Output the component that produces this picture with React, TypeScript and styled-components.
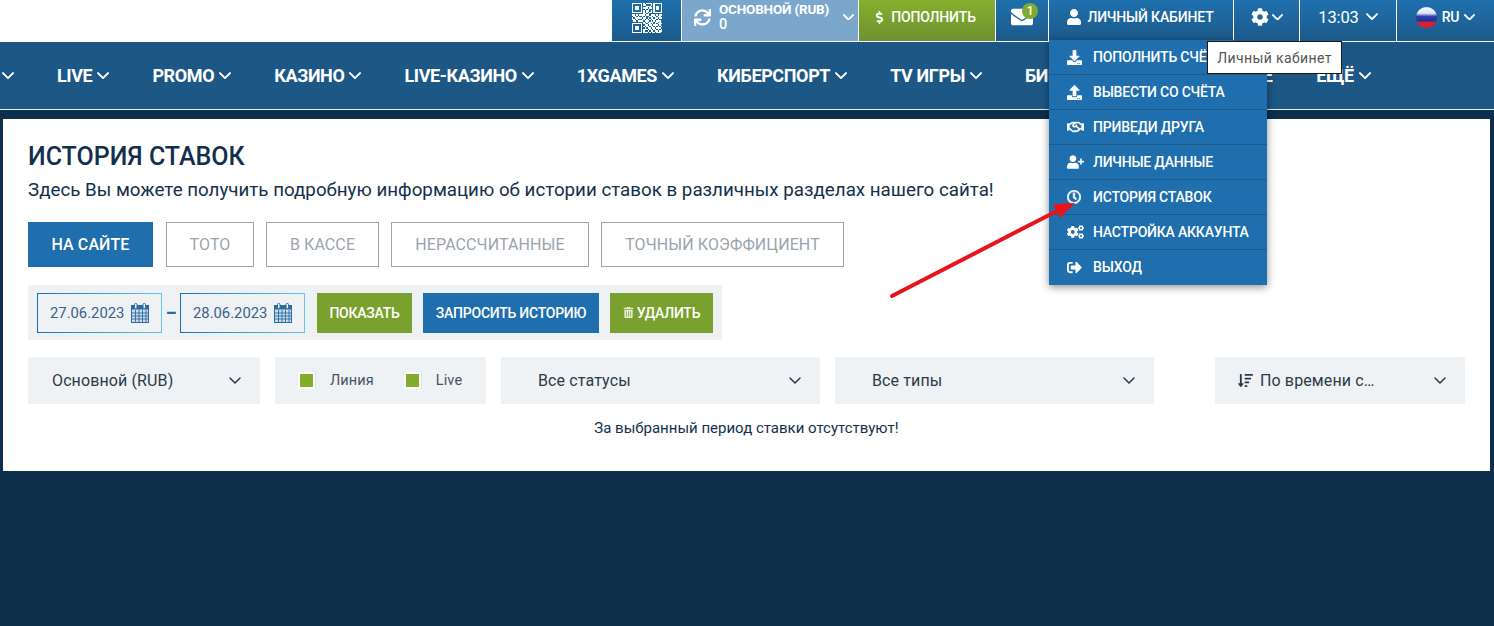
import React from "react";
import styled, { createGlobalStyle } from "styled-components";
import {
  FaSync, FaEnvelope, FaUser, FaCog, FaDownload, FaUpload, FaRegHandshake,
  FaUserPlus, FaRegClock, FaCogs, FaSignOutAlt, FaTrashAlt, FaSortAmountDown, FaDollarSign,
} from "react-icons/fa";

const Global = createGlobalStyle`
  html, body { margin: 0; padding: 0; background: #0d2f4b; height: 100%; overflow: hidden; }
  * { box-sizing: border-box; }
  body { font-family: Roboto, "Liberation Sans", sans-serif; }
`;

const Page = styled.div`
  position: relative;
  width: 1494px;
  height: 626px;
  overflow: hidden;
  background: #0d2f4b;
`;

const TopBar = styled.header`
  height: 42px;
  background: #fff;
  display: flex;
  justify-content: flex-end;
  gap: 1px;
  padding-bottom: 1px;
  position: relative;
  z-index: 3;
`;

const TopItem = styled.div<{ $w: number; $variant?: "blue" | "balance" | "green"; $gap?: number; $pr?: number; $pl?: number }>`
  width: ${(p) => p.$w}px;
  height: 41px;
  position: relative;
  display: flex;
  align-items: center;
  justify-content: center;
  gap: ${(p) => p.$gap ?? 5}px;
  padding: 0 ${(p) => p.$pr ?? 0}px 7px ${(p) => p.$pl ?? 0}px;
  color: #fff;
  font-size: 14px;
  font-weight: 500;
  letter-spacing: -0.15px;
  background: ${(p) =>
    p.$variant === "balance"
      ? "#7ba7cd"
      : p.$variant === "green"
      ? "linear-gradient(to bottom, #86b02e, #6d9030)"
      : "linear-gradient(to bottom, #1f70ae, #1c5a89)"};
`;

const QrSlot = styled(TopItem)`
  padding-bottom: 5px;
`;

const BalanceText = styled.div`
  display: flex;
  flex-direction: column;
  width: 119px;
  font-size: 13.5px;
  font-weight: 700;
  line-height: 16px;
  margin-left: 3px;
  letter-spacing: -0.2px;
  span:last-child { font-size: 14.5px; font-weight: 500; }
`;

const Badge = styled.span`
  position: absolute;
  top: 3px;
  left: 26px;
  width: 16px;
  height: 16px;
  border-radius: 50%;
  background: #7fa92f;
  color: #fff;
  font-size: 12px;
  font-weight: 500;
  display: flex;
  align-items: center;
  justify-content: center;
`;

const Time = styled.span`
  font-size: 16.5px;
  font-weight: 400;
  margin-right: 2px;
`;

const Flag = styled.span`
  display: block;
  width: 21px;
  height: 21px;
  border-radius: 50%;
  background: linear-gradient(to bottom, #f4f6fa 0%, #dfe6f2 30%, #2f40b0 45%, #22319c 65%, #e0202a 75%, #d81e28 100%);
`;

const Chev = ({ size = 12, width = 2 }: { size?: number; width?: number }) => (
  <svg width={size} height={size * 0.6} viewBox="0 0 12 7" fill="none" style={{ flex: "none" }}>
    <path d="M1 1l5 5 5-5" stroke="currentColor" strokeWidth={width} strokeLinecap="round" strokeLinejoin="round" />
  </svg>
);

const QrIcon = () => {
  const cells = [
    "111111101011110111111",
    "100000101100010100001",
    "101110100011100101101",
    "101110101110110101101",
    "101110100101000101101",
    "100000101011010100001",
    "111111101010110111111",
    "000000001101000000000",
    "110101111011011101011",
    "011010010100110110110",
    "101111101101011011011",
    "110100011010101110100",
    "011011110111010101110",
    "000000001010111011010",
    "111111101101101010111",
    "100000100110110111010",
    "101110101011011010101",
    "101110100101101101110",
    "101110101110110110101",
    "100000101001011011011",
    "111111101110101101110",
  ];
  return (
    <svg width="30" height="30" viewBox="0 0 21 21" shapeRendering="crispEdges">
      {cells.map((row, y) =>
        row.split("").map((c, x) => (c === "1" ? <rect key={`${x}-${y}`} x={x} y={y} width="1" height="1" fill="#fff" /> : null))
      )}
    </svg>
  );
};

const CalendarIcon = () => (
  <svg width="18" height="20" viewBox="0 0 18 20" style={{ flex: "none" }}>
    <rect x="0.5" y="2.5" width="17" height="17" fill="#cfdbe7" stroke="#2a6ba3" />
    <rect x="0.5" y="2.5" width="17" height="4" fill="#2a6ba3" />
    <rect x="3.5" y="0.5" width="2.5" height="5" rx="1" fill="#eff2f5" stroke="#2a6ba3" />
    <rect x="12" y="0.5" width="2.5" height="5" rx="1" fill="#eff2f5" stroke="#2a6ba3" />
    <path d="M1 10h16M1 13h16M1 16h16M4.500 7v12M8 7v12M11.500 7v12M15 7v12" stroke="#2a6ba3" strokeWidth="0.9" />
  </svg>
);

const Nav = styled.nav`
  height: 68px;
  background: #1d5785;
  border-bottom: 1px solid #e8eef3;
  display: flex;
  align-items: center;
  padding: 0 0 0 2px;
  gap: 43px;
  overflow: hidden;
  white-space: nowrap;
`;

const NavItem = styled.span<{ $spacing?: number }>`
  display: inline-flex;
  align-items: center;
  gap: 5px;
  color: #fff;
  font-size: 18px;
  font-weight: 700;
  letter-spacing: ${(p) => p.$spacing ?? -0.38}px;
  flex: none;
`;

const Panel = styled.main`
  margin: 9px 4px 0 3px;
  height: 352px;
  background: #fff;
  padding: 24px 25px 0;
`;

const Title = styled.h1`
  margin: 0;
  font-size: 25px;
  font-weight: 500;
  line-height: 28px;
  color: #12304c;
`;

const Subtitle = styled.p`
  margin: 6px 0 0;
  font-size: 18.75px;
  line-height: 26px;
  white-space: nowrap;
  color: #12304c;
`;

const Tabs = styled.div`
  display: flex;
  margin-top: 19px;
  gap: 12px;
`;

const Tab = styled.div<{ $w: number; $active?: boolean }>`
  width: ${(p) => p.$w}px;
  height: 45px;
  padding-bottom: 1px;
  display: flex;
  align-items: center;
  justify-content: center;
  font-size: 16px;
  letter-spacing: 0.1px;
  font-weight: ${(p) => (p.$active ? 500 : 400)};
  color: ${(p) => (p.$active ? "#fff" : "#9aa4ad")};
  background: ${(p) => (p.$active ? "#1f6ead" : "#fff")};
  border: 1px solid ${(p) => (p.$active ? "#1f6ead" : "#9aa4ad")};
  &:first-child { margin-right: 1px; }
`;

const FilterBar = styled.div`
  margin-top: 18px;
  width: 694px;
  height: 55px;
  background: #eff2f5;
  padding: 8px 9px;
  display: flex;
  align-items: center;
`;

const DateField = styled.div`
  width: 125px;
  height: 40px;
  background: #eff2f5;
  border: 1px solid;
  border-image: linear-gradient(to right, #1f6ead, #6cc4e4) 1;
  display: flex;
  align-items: center;
  gap: 7px;
  padding-left: 12px;
  font-size: 14.8px;
  color: #3a6187;
`;

const Dash = styled.span`
  width: 18px;
  display: flex;
  justify-content: center;
  color: #1f6ead;
  font-size: 17px;
  font-weight: 900;
`;

const ActionButton = styled.div<{ $w: number; $ml: number; $blue?: boolean }>`
  width: ${(p) => p.$w}px;
  margin-left: ${(p) => p.$ml}px;
  height: 40px;
  display: flex;
  align-items: center;
  justify-content: center;
  gap: 3px;
  color: #fff;
  font-size: 14px;
  font-weight: 500;
  letter-spacing: -0.25px;
  background: ${(p) => (p.$blue ? "#1f6ead" : "#7aa12e")};
`;

const SelectRow = styled.div`
  margin-top: 17px;
  display: flex;
  gap: 15px;
`;

const SelectBox = styled.div<{ $w: number; $pl: number; $ml?: number }>`
  width: ${(p) => p.$w}px;
  margin-left: ${(p) => p.$ml ?? 0}px;
  height: 47px;
  background: #eff2f5;
  display: flex;
  align-items: center;
  justify-content: space-between;
  padding: 0 19px 0 ${(p) => p.$pl}px;
  font-size: 16px;
  letter-spacing: 0.12px;
  color: #2b3a47;
`;

const SelectLabel = styled.span`
  display: inline-flex;
  align-items: center;
  gap: 7px;
`;

const CheckGroup = styled.div`
  width: 211px;
  height: 47px;
  background: #eff2f5;
  display: flex;
  align-items: center;
  padding-left: 23px;
  font-size: 14.5px;
  letter-spacing: 0.1px;
  color: #46535f;
`;

const Check = styled.span<{ $ml?: number }>`
  width: 17px;
  height: 17px;
  background: #82ad2b;
  border: 2px solid #fff;
  box-shadow: 1px 0 0 #dfe4e8;
  margin-left: ${(p) => p.$ml ?? 0}px;
  margin-right: 15px;
`;

const Empty = styled.div`
  margin-top: 15px;
  text-align: center;
  font-size: 15px;
  line-height: 18px;
  color: #12304c;
`;

const Menu = styled.ul`
  position: absolute;
  top: 40px;
  left: 0;
  width: 218px;
  margin: 0;
  padding: 0;
  list-style: none;
  background: #1f6ead;
  box-shadow: 0 2px 8px rgba(0, 0, 0, 0.45);
`;

const MenuItem = styled.li`
  height: 35px;
  display: flex;
  align-items: center;
  padding-left: 18px;
  gap: 9px;
  color: #fff;
  font-size: 14px;
  font-weight: 500;
  letter-spacing: -0.2px;
  white-space: nowrap;
  border-bottom: 1px solid #1b5a8a;
  &:last-child { border-bottom: 0; padding-bottom: 1px; }
`;

const MenuIcon = styled.span`
  width: 17px;
  display: flex;
  justify-content: flex-start;
  flex: none;
`;

const HeavyClock = styled(FaRegClock)`
  stroke: currentColor;
  stroke-width: 24px;
`;

const HeavyHandshake = styled(FaRegHandshake)`
  stroke: currentColor;
  stroke-width: 14px;
`;

const Tooltip = styled.div`
  position: absolute;
  top: 41px;
  left: 158px;
  width: 135px;
  height: 33px;
  padding: 0;
  background: #fff;
  border: 1px solid #1a1a1a;
  display: flex;
  align-items: center;
  justify-content: center;
  font-size: 14px;
  font-weight: 400;
  letter-spacing: 0.4px;
  color: #555;
`;

const Pointer = styled.svg`
  position: absolute;
  top: 190px;
  left: 885px;
  z-index: 5;
`;

const menu = [
  [<FaDownload size={15} />, "ПОПОЛНИТЬ СЧЁТ"],
  [<FaUpload size={15} />, "ВЫВЕСТИ СО СЧЁТА"],
  [<HeavyHandshake size={20} />, "ПРИВЕДИ ДРУГА"],
  [<FaUserPlus size={18} />, "ЛИЧНЫЕ ДАННЫЕ"],
  [<HeavyClock size={14} />, "ИСТОРИЯ СТАВОК"],
  [<FaCogs size={18} />, "НАСТРОЙКА АККАУНТА"],
  [<FaSignOutAlt size={15} />, "ВЫХОД"],
] as const;

export default function App() {
  return (
    <Page>
      <Global />
      <TopBar>
        <QrSlot $w={69}><QrIcon /></QrSlot>
        <TopItem $w={176} $variant="balance" $pl={8}>
          <FaSync size={17} />
          <BalanceText><span>ОСНОВНОЙ (RUB)</span><span>0</span></BalanceText>
          <Chev size={11} />
        </TopItem>
        <TopItem $w={136} $variant="green" $pr={5}><FaDollarSign size={13} /><span>ПОПОЛНИТЬ</span></TopItem>
        <TopItem $w={52}>
          <FaEnvelope size={22} />
          <Badge>1</Badge>
        </TopItem>
        <TopItem $w={184} $pr={2}>
          <FaUser size={16} /><span>ЛИЧНЫЙ КАБИНЕТ</span>
          <Menu>
            {menu.map(([icon, label]) => (
              <MenuItem key={label}><MenuIcon>{icon}</MenuIcon>{label}</MenuItem>
            ))}
          </Menu>
          <Tooltip>Личный кабинет</Tooltip>
        </TopItem>
        <TopItem $w={65} $gap={3} $pl={1}><FaCog size={18} /><Chev size={11} /></TopItem>
        <TopItem $w={96}><Time>13:03</Time><Chev size={12} /></TopItem>
        <TopItem $w={97}><Flag /><span>RU</span><Chev size={11} /></TopItem>
      </TopBar>
      <Nav>
        <NavItem><Chev size={12} /></NavItem>
        <NavItem>LIVE<Chev size={12} /></NavItem>
        <NavItem>PROMO<Chev size={12} /></NavItem>
        <NavItem>КАЗИНО<Chev size={12} /></NavItem>
        <NavItem>LIVE-КАЗИНО<Chev size={12} /></NavItem>
        <NavItem>1XGAMES<Chev size={12} /></NavItem>
        <NavItem>КИБЕРСПОРТ<Chev size={12} /></NavItem>
        <NavItem>TV ИГРЫ<Chev size={12} /></NavItem>
        <NavItem>БИНГО<Chev size={12} /></NavItem>
        <NavItem $spacing={0.55}>ФИНАНСОВЫЕ</NavItem>
        <NavItem>ЕЩЁ<Chev size={12} /></NavItem>
      </Nav>
      <Panel>
        <Title>ИСТОРИЯ СТАВОК</Title>
        <Subtitle>Здесь Вы можете получить подробную информацию об истории ставок в различных разделах нашего сайта!</Subtitle>
        <Tabs>
          <Tab $w={125} $active>НА САЙТЕ</Tab>
          <Tab $w={88}>ТОТО</Tab>
          <Tab $w={113}>В КАССЕ</Tab>
          <Tab $w={198}>НЕРАССЧИТАННЫЕ</Tab>
          <Tab $w={243}>ТОЧНЫЙ КОЭФФИЦИЕНТ</Tab>
        </Tabs>
        <FilterBar>
          <DateField>27.06.2023<CalendarIcon /></DateField>
          <Dash>–</Dash>
          <DateField>28.06.2023<CalendarIcon /></DateField>
          <ActionButton $w={95} $ml={12}>ПОКАЗАТЬ</ActionButton>
          <ActionButton $w={176} $ml={11} $blue>ЗАПРОСИТЬ ИСТОРИЮ</ActionButton>
          <ActionButton $w={103} $ml={11}><FaTrashAlt size={11} color="#e6ecd8" />УДАЛИТЬ</ActionButton>
        </FilterBar>
        <SelectRow>
          <SelectBox $w={232} $pl={24}>Основной (RUB)<Chev size={12} width={1.5} /></SelectBox>
          <CheckGroup><Check />Линия<Check $ml={30} />Live</CheckGroup>
          <SelectBox $w={319} $pl={37}>Все статусы<Chev size={12} width={1.5} /></SelectBox>
          <SelectBox $w={319} $pl={37}>Все типы<Chev size={12} width={1.5} /></SelectBox>
          <SelectBox $w={250} $pl={23} $ml={46}>
            <SelectLabel><FaSortAmountDown size={15} />По времени с…</SelectLabel>
            <Chev size={12} width={1.5} />
          </SelectBox>
        </SelectRow>
        <Empty>За выбранный период ставки отсутствуют!</Empty>
      </Panel>
      <Pointer width="195" height="115" viewBox="0 0 195 115">
        <path d="M7 106L172 21" stroke="#e8141c" strokeWidth="4" strokeLinecap="round" />
        <path d="M190 13L168 14L175 28Z" fill="#e8141c" />
      </Pointer>
    </Page>
  );
}
